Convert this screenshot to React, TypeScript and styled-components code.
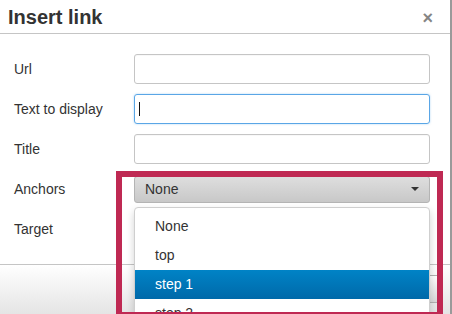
import styled, { createGlobalStyle } from "styled-components";

const GlobalStyle = createGlobalStyle`
  html, body {
    margin: 0;
    padding: 0;
    background: #fff;
    overflow: hidden;
  }
  body {
    font-family: "Liberation Sans", Arial, sans-serif;
    color: #333;
  }
`;

const fields = ["Url", "Text to display", "Title"];
const anchors = ["None", "top", "step 1", "step 2"];

const App = () => {
  return (
    <>
      <GlobalStyle />
      <Window>
        <Dialog>
          <Header>
            <Heading>Insert link</Heading>
            <Close>×</Close>
          </Header>
          <Body>
            {fields.map((label, idx) => (
              <Row key={label}>
                <Label>{label}</Label>
                <Input $focused={idx === 1}>{idx === 1 && <Caret />}</Input>
              </Row>
            ))}
            <Row>
              <Label>Anchors</Label>
              <Select>
                <span>None</span>
                <Arrow />
              </Select>
            </Row>
            <Row>
              <Label>Target</Label>
            </Row>
          </Body>
          <Footer>
            <FooterButton>Ok</FooterButton>
            <FooterButton>Cancel</FooterButton>
          </Footer>
        </Dialog>

        <Menu>
          {anchors.map((name) => (
            <MenuItem key={name} $active={name === "step 1"}>
              {name}
            </MenuItem>
          ))}
        </Menu>

        {/* annotation frame around the anchors picker */}
        <Highlight />
      </Window>
    </>
  );
};

export default App;

const Window = styled.div`
  position: relative;
  width: 452px;
  height: 314px;
  overflow: hidden;
`;

const Dialog = styled.section`
  width: 450px;
  height: 330px;
  border-right: 2px solid #9a9a9a;
  display: flex;
  flex-direction: column;
  background: #fff;
`;

const Header = styled.header`
  height: 33px;
  border-bottom: 1px solid #c5c5c5;
  display: flex;
  align-items: center;
  justify-content: space-between;
  padding: 0 17px 0 8px;
`;

const Heading = styled.h1`
  margin: 0;
  font-size: 20px;
  font-weight: bold;
  color: #333;
  line-height: 30px;
`;

const Close = styled.span`
  font-size: 18px;
  font-weight: bold;
  color: #858585;
  line-height: 1;
  margin-top: 2px;
`;

const Body = styled.div`
  display: flex;
  flex-direction: column;
  gap: 10px;
  padding: 20px 20px 20px 14px;
`;

const Row = styled.div`
  height: 30px;
  display: flex;
  align-items: center;
`;

const Label = styled.label`
  width: 120px;
  font-size: 14px;
  color: #333;
`;

const Input = styled.div<{ $focused?: boolean }>`
  box-sizing: border-box;
  width: 296px;
  height: 30px;
  border: 1px solid ${({ $focused }) => ($focused ? "#5aa6e6" : "#c5c5c5")};
  border-radius: 3px;
  box-shadow: ${({ $focused }) =>
    $focused ? "0 0 2px rgba(82, 168, 236, 0.5)" : "inset 0 1px 1px rgba(0,0,0,0.03)"};
  display: flex;
  align-items: center;
  padding-left: 4px;
`;

const Caret = styled.span`
  width: 1px;
  height: 14px;
  background: #111;
`;

const Select = styled.div`
  box-sizing: border-box;
  width: 296px;
  height: 27px;
  border: 1px solid #b4b4b4;
  border-radius: 3px;
  background: linear-gradient(#dedede, #c8c8c8);
  display: flex;
  align-items: center;
  justify-content: space-between;
  padding: 0 10px 0 10px;
  font-size: 14px;
  color: #333;
`;

const Arrow = styled.span`
  width: 0;
  height: 0;
  border-left: 4px solid transparent;
  border-right: 4px solid transparent;
  border-top: 4px solid #333;
`;

const Footer = styled.footer`
  flex: 1;
  border-top: 1px solid #c5c5c5;
  background: linear-gradient(#fff, #e4e4e4 50px);
  display: flex;
  justify-content: flex-end;
  align-items: flex-start;
  gap: 8px;
  padding: 10px 10px 0 0;
`;

const FooterButton = styled.button`
  height: 28px;
  padding: 0 14px;
  border: 1px solid #b1b1b1;
  border-radius: 3px;
  background: linear-gradient(#fff, #d9d9d9);
  font-family: inherit;
  font-size: 14px;
  color: #333;
`;

const Menu = styled.ul`
  position: absolute;
  left: 134px;
  top: 207px;
  box-sizing: border-box;
  width: 296px;
  margin: 0;
  padding: 4px 0 0;
  list-style: none;
  background: #fff;
  border: 1px solid #cfcfcf;
  border-radius: 4px;
  box-shadow: 0 4px 8px rgba(0, 0, 0, 0.18);
`;

const MenuItem = styled.li<{ $active?: boolean }>`
  height: 29px;
  line-height: 29px;
  padding-left: 20px;
  font-size: 14px;
  color: ${({ $active }) => ($active ? "#fff" : "#333")};
  background: ${({ $active }) =>
    $active ? "linear-gradient(#0083c6, #0069a9)" : "transparent"};
`;

const Highlight = styled.div`
  position: absolute;
  left: 116px;
  top: 171px;
  width: 327px;
  height: 147px;
  box-sizing: border-box;
  border: 6px solid #bf2953;
  pointer-events: none;
`;
